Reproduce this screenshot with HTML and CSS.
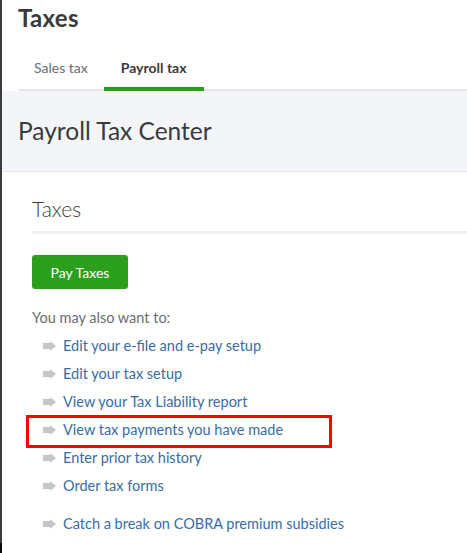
FILE: index.html
```html
<!DOCTYPE html>
<html lang="en">
<head>
<meta charset="utf-8">
<title>Taxes</title>
<link rel="stylesheet" href="styles.css">
</head>
<body>
<div class="edge"></div>
<main class="app">
  <header class="page-head">
    <h1 class="page-title">Taxes</h1>
    <nav class="tabs">
      <a class="tab" href="#">Sales tax</a>
      <a class="tab active" href="#">Payroll tax</a>
    </nav>
  </header>

  <div class="center-bar">
    <h2 class="center-title">Payroll Tax Center</h2>
  </div>

  <section class="taxes">
    <h3 class="section-title">Taxes</h3>
    <button class="btn-primary" type="button">Pay Taxes</button>
    <p class="also">You may also want to:</p>
    <ul class="links">
      <li><span class="arrow"></span><a href="#">Edit your e-file and e-pay setup</a></li>
      <li><span class="arrow"></span><a href="#">Edit your tax setup</a></li>
      <li><span class="arrow"></span><a href="#">View your Tax Liability report</a></li>
      <li class="marked"><span class="arrow"></span><a href="#">View tax payments you have made</a><span class="mark-box"></span></li>
      <li><span class="arrow"></span><a href="#">Enter prior tax history</a></li>
      <li><span class="arrow"></span><a href="#">Order tax forms</a></li>
      <li class="spaced"><span class="arrow"></span><a href="#">Catch a break on COBRA premium subsidies</a></li>
    </ul>
  </section>
</main>
</body>
</html>
```

FILE: styles.css
```css
html, body {
  margin: 0;
  padding: 0;
  background: #fff;
}

body {
  display: flex;
  min-height: 100vh;
  font-family: Lato, "Noto Sans", Arial, sans-serif;
  color: #393a3d;
}

/* thin dark window edge on the left */
.edge {
  flex: 0 0 2px;
  background: linear-gradient(to bottom, #3a3b3f 0, #3a3b3f 543px, #0c0c0c 543px);
}

.app {
  flex: 1;
  min-width: 0;
}

/* page header with tabs */
.page-head {
  padding-left: 16px;
}

.page-title {
  margin: 2px 0 0;
  font-size: 24px;
  line-height: 32px;
  font-weight: 700;
  letter-spacing: 0.3px;
  color: #393a3d;
}

.tabs {
  display: flex;
  border-bottom: 2px solid #e3e5e8;
}

.tab {
  display: block;
  padding: 24px 16px 9px;
  margin-bottom: -2px;
  font-size: 14px;
  line-height: 20px;
  color: #6b6c72;
  text-decoration: none;
  border-bottom: 4px solid transparent;
}

.tab.active {
  color: #393a3d;
  font-weight: 700;
  padding-left: 17px;
  padding-right: 17px;
  border-bottom-color: #2ca01c;
  border-radius: 2px 2px 0 0;
}

/* grey title bar */
.center-bar {
  height: 80px;
  display: flex;
  align-items: center;
  padding-left: 16px;
  background: #f4f5f8;
  border-bottom: 1px solid #e3e5e8;
}

.center-title {
  margin: 0;
  font-size: 24.5px;
  line-height: 32px;
  font-weight: 400;
  color: #393a3d;
}

/* taxes section */
.taxes {
  padding-left: 30px;
}

.section-title {
  margin: 23px 0 0;
  padding-bottom: 8px;
  border-bottom: 3px solid #f0f0f0;
  font-size: 21px;
  line-height: 28px;
  font-weight: 300;
  color: #393a3d;
}

.btn-primary {
  display: block;
  margin-top: 21px;
  height: 34px;
  width: 96px;
  padding: 0;
  border: 0;
  border-radius: 3px;
  background: #2ca01c;
  color: #fff;
  font-family: inherit;
  font-size: 14px;
  font-weight: 400;
}

.also {
  margin: 19px 0 0;
  font-size: 14.5px;
  line-height: 20px;
  color: #6b6c72;
}

.links {
  list-style: none;
  margin: 4px 0 0;
  padding: 0 0 0 11px;
}

.links li {
  position: relative;
  display: flex;
  align-items: center;
  height: 28px;
}

.links li.spaced {
  margin-top: 10px;
}

.links a {
  font-size: 14.5px;
  line-height: 20px;
  color: #386da4;
  text-decoration: none;
}

/* grey block arrow before each link */
.arrow {
  position: relative;
  flex: 0 0 14px;
  height: 10px;
  margin-right: 6px;
}

.arrow::before {
  content: "";
  position: absolute;
  left: 0;
  top: 2px;
  width: 8px;
  height: 6px;
  background: #c6c6c6;
}

.arrow::after {
  content: "";
  position: absolute;
  left: 7px;
  top: 0;
  border-left: 6px solid #c6c6c6;
  border-top: 5px solid transparent;
  border-bottom: 5px solid transparent;
}

/* red highlight frame around one link */
.mark-box {
  position: absolute;
  left: -17px;
  top: -1px;
  width: 300px;
  height: 27px;
  border: 3px solid #ff0000;
  pointer-events: none;
}
```
